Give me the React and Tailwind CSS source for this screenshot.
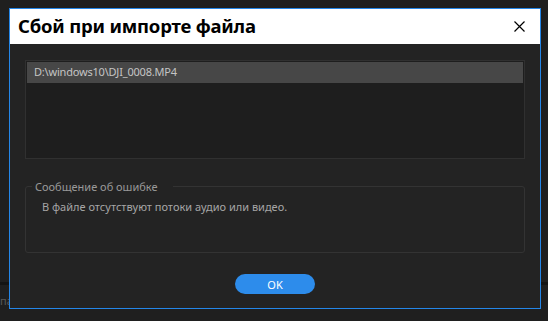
import React from 'react';

const ImportErrorDialog = () => {
  return (
    <div className="relative z-10 ml-[9px] mt-[8px] w-[532px] h-[301px] border border-[#2486e8] bg-[#232323] flex flex-col">
      <div className="h-[35px] bg-white flex items-center justify-between pl-[8px] pr-[15px] shrink-0">
        <h1 className="text-[18.5px] font-bold text-black leading-none tracking-[-0.2px] -mt-[1px]">Сбой при импорте файла</h1>
        <svg width="11" height="11" viewBox="0 0 11 11" className="text-black">
          <path d="M0.5 0.5 L10.5 10.5 M10.5 0.5 L0.5 10.5" stroke="currentColor" strokeWidth="1.2" />
        </svg>
      </div>

      <div className="flex flex-col px-[15px] pt-[16px]">
        <div className="h-[99px] border border-[#303030] bg-[#1e1e1e] p-[1px]">
          <div className="h-[21px] bg-[#474747] flex items-center pl-[7px] text-[11px] tracking-[-0.2px] text-[#c4c4c4]">
            D:\windows10\DJI_0008.MP4
          </div>
        </div>

        <fieldset className="mt-[20px] h-[74px] border border-[#333333] rounded-[3px] px-0 pb-0">
          <legend className="ml-[6px] pl-[3px] pr-[15px] text-[11px] text-[#999999] leading-[15px]">Сообщение об ошибке</legend>
          <p className="pl-[16px] pt-[5px] text-[11px] text-[#a6a6a6]">В файле отсутствуют потоки аудио или видео.</p>
        </fieldset>

        <div className="flex justify-center mt-[21px]">
          <button className="w-[80px] h-[20px] rounded-full bg-[#2d8ceb] text-white text-[11px] leading-none">OK</button>
        </div>
      </div>
    </div>
  );
};

export default function App() {
  return (
    <div className="w-[548px] h-[321px] bg-[#1f1f1f] overflow-hidden relative" style={{ fontFamily: '"Noto Sans", "Open Sans", sans-serif' }}>
      <ImportErrorDialog />
      <div className="absolute left-0 top-[282px] w-[9px] h-[3px] bg-[#141414]" />
      <div className="absolute left-0 top-[293px] text-[11px] text-[#5a5a5a]">па</div>
      <div className="absolute right-0 top-[282px] w-[7px] h-[3px] bg-[#141414]" />
    </div>
  );
}
